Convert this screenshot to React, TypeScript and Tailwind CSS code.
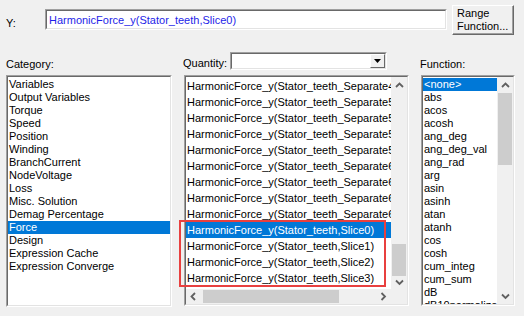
import React from "react";

const Chevron = ({ dir }: { dir: "up" | "down" | "left" | "right" }) => {
  const d =
    dir === "up"
      ? "M1 5 L4.5 1.5 L8 5"
      : dir === "down"
      ? "M1 1.5 L4.5 5 L8 1.5"
      : dir === "left"
      ? "M5 1 L1.5 4.5 L5 8"
      : "M1.5 1 L5 4.5 L1.5 8";
  const w = dir === "up" || dir === "down" ? 9 : 7;
  const h = dir === "up" || dir === "down" ? 7 : 9;
  return (
    <svg width={w} height={h} viewBox={`0 0 ${w} ${h}`}>
      <path d={d} fill="none" stroke="#606060" strokeWidth="1.8" />
    </svg>
  );
};

const Sunken = ({
  className,
  children,
}: {
  className?: string;
  children?: React.ReactNode;
}) => (
  <div
    className={`border border-t-[#a0a0a0] border-l-[#a0a0a0] border-b-white border-r-white ${className ?? ""}`}
  >
    <div className="border border-t-[#696969] border-l-[#696969] border-b-[#e3e3e3] border-r-[#e3e3e3] w-full h-full bg-white overflow-hidden relative">
      {children}
    </div>
  </div>
);

const categories = [
  "Variables",
  "Output Variables",
  "Torque",
  "Speed",
  "Position",
  "Winding",
  "BranchCurrent",
  "NodeVoltage",
  "Loss",
  "Misc. Solution",
  "Demag Percentage",
  "Force",
  "Design",
  "Expression Cache",
  "Expression Converge",
];

const quantities = [
  "HarmonicForce_y(Stator_teeth_Separate48)",
  "HarmonicForce_y(Stator_teeth_Separate52)",
  "HarmonicForce_y(Stator_teeth_Separate53)",
  "HarmonicForce_y(Stator_teeth_Separate54)",
  "HarmonicForce_y(Stator_teeth_Separate55)",
  "HarmonicForce_y(Stator_teeth_Separate60)",
  "HarmonicForce_y(Stator_teeth_Separate61)",
  "HarmonicForce_y(Stator_teeth_Separate62)",
  "HarmonicForce_y(Stator_teeth_Separate63)",
  "HarmonicForce_y(Stator_teeth,Slice0)",
  "HarmonicForce_y(Stator_teeth,Slice1)",
  "HarmonicForce_y(Stator_teeth,Slice2)",
  "HarmonicForce_y(Stator_teeth,Slice3)",
];

const functions = [
  "<none>",
  "abs",
  "acos",
  "acosh",
  "ang_deg",
  "ang_deg_val",
  "ang_rad",
  "arg",
  "asin",
  "asinh",
  "atan",
  "atanh",
  "cos",
  "cosh",
  "cum_integ",
  "cum_sum",
  "dB",
  "dB10normalize",
];

export default function App() {
  return (
    <div className="relative w-[524px] h-[316px] bg-[#f0f0f0] overflow-hidden font-['Liberation_Sans',Arial,sans-serif] text-[11px] leading-[13px] text-black">
      {/* Row 1 */}
      <div className="flex items-start pt-[5px]">
        <div className="ml-[6px] mt-[12px] w-[39px]">Y:</div>
        <Sunken className="mt-[4px] w-[402px] h-[21px]">
          <div className="pl-[2px] pt-[3px] text-[#1e1ee8] whitespace-nowrap">
            HarmonicForce_y(Stator_teeth,Slice0)
          </div>
        </Sunken>
        <div className="ml-[5px] w-[62px] h-[30px] border border-t-white border-l-white border-b-[#696969] border-r-[#696969]">
          <div className="w-full h-full border-b border-r border-b-[#a0a0a0] border-r-[#a0a0a0] bg-[#f0f0f0] pl-[4px] pt-[1px] leading-[13px]">
            <div>Range</div>
            <div>Function...</div>
          </div>
        </div>
      </div>

      {/* Row 2 */}
      <div className="flex items-end mt-[17px] h-[18px]">
        <div className="ml-[6px] w-[177px] -mb-[1px]">Category:</div>
        <div className="w-[47px]">Quantity:</div>
        <Sunken className="w-[157px] h-[18px]">
          <div className="absolute right-0 top-0 w-[15px] h-[14px] border border-t-white border-l-white border-b-[#696969] border-r-[#696969] bg-[#f0f0f0] flex items-center justify-center">
            <svg width="7" height="4" viewBox="0 0 7 4">
              <path d="M0 0 L7 0 L3.5 4 Z" fill="#000" />
            </svg>
          </div>
        </Sunken>
        <div className="ml-[33px] -mb-[1px]">Function:</div>
      </div>

      {/* Row 3 */}
      <div className="flex mt-[5px]">
        {/* Category list */}
        <Sunken className="ml-[6px] w-[166px] h-[232px]">
          <div className="flex flex-col pt-[1px]">
            {categories.map((c) => (
              <div
                key={c}
                className={`h-[13px] pl-[1px] whitespace-nowrap ${
                  c === "Force" ? "bg-[#0078d7] text-white" : ""
                }`}
              >
                {c}
              </div>
            ))}
          </div>
        </Sunken>

        {/* Quantity list */}
        <Sunken className="ml-[12px] w-[225px] h-[231px]">
          <div className="flex flex-col h-full">
            <div className="flex flex-1 min-h-0">
              <div className="flex-1 min-w-0 overflow-hidden pt-[1px]">
                {quantities.map((q, i) => (
                  <div
                    key={i}
                    className={`h-[16px] pl-[1px] leading-[16px] whitespace-nowrap ${
                      i === 9 ? "bg-[#0078d7] text-white" : ""
                    }`}
                  >
                    {q}
                  </div>
                ))}
              </div>
              <div className="w-[16px] bg-[#f0f0f0] flex flex-col">
                <div className="h-[16px] flex items-center justify-center">
                  <Chevron dir="up" />
                </div>
                <div className="flex-1" />
                <div className="h-[32px] bg-[#cdcdcd] mx-[1px]" />
                <div className="h-[13px] flex items-center justify-center">
                  <Chevron dir="down" />
                </div>
              </div>
            </div>
            <div className="h-[15px] flex bg-[#f0f0f0]">
              <div className="w-[15px] flex items-center justify-center">
                <Chevron dir="left" />
              </div>
              <div className="w-[136px] bg-[#cdcdcd] my-[1px] ml-[2px]" />
              <div className="flex-1" />
              <div className="w-[15px] flex items-center justify-center">
                <Chevron dir="right" />
              </div>
              <div className="w-[16px] bg-[#f0f0f0]" />
            </div>
          </div>
        </Sunken>

        {/* Function list */}
        <Sunken className="ml-[12px] w-[94px] h-[231px]">
          <div className="flex h-full">
            <div className="flex-1 min-w-0 overflow-hidden pt-[1px]">
              {functions.map((f) => (
                <div
                  key={f}
                  className={`h-[13px] pl-[1px] whitespace-nowrap ${
                    f === "<none>" ? "bg-[#0078d7] text-white" : ""
                  }`}
                >
                  {f}
                </div>
              ))}
            </div>
            <div className="w-[16px] bg-[#f0f0f0] flex flex-col">
              <div className="h-[16px] flex items-center justify-center">
                <Chevron dir="up" />
              </div>
              <div className="h-[72px] bg-[#cdcdcd] mx-[1px]" />
              <div className="flex-1" />
              <div className="h-[16px] flex items-center justify-center">
                <Chevron dir="down" />
              </div>
            </div>
          </div>
        </Sunken>
      </div>

      {/* Red annotation box */}
      <div className="absolute left-[179px] top-[220px] w-[207px] h-[67px] border-2 border-[#e8403f] pointer-events-none" />
    </div>
  );
}
